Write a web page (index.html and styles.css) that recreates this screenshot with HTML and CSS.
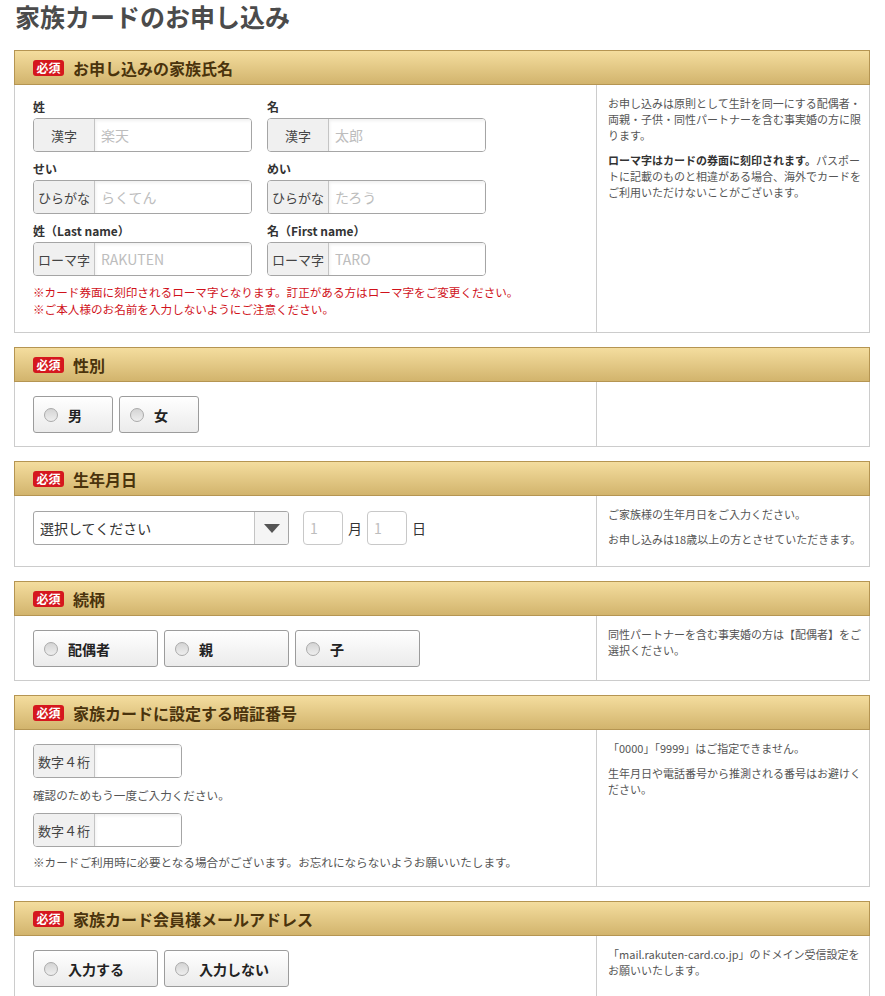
FILE: index.html
```html
<!DOCTYPE html>
<html lang="ja">
<head>
  <meta charset="UTF-8">
  <meta name="viewport" content="width=device-width, initial-scale=1.0">
  <title>家族カードのお申し込み</title>
  <link rel="stylesheet" href="styles.css">
</head>
<body>
  <div class="page">
    <h1 class="page-title">家族カードのお申し込み</h1>

    <section class="block">
      <h2 class="block-head"><span class="req">必須</span>お申し込みの家族氏名</h2>
      <div class="block-body">
        <div class="block-main">
          <div class="name-grid">
            <div class="field">
              <label class="field-label">姓</label>
              <div class="addon-input"><span class="addon">漢字</span><input type="text" placeholder="楽天"></div>
            </div>
            <div class="field">
              <label class="field-label">名</label>
              <div class="addon-input"><span class="addon">漢字</span><input type="text" placeholder="太郎"></div>
            </div>
            <div class="field">
              <label class="field-label">せい</label>
              <div class="addon-input"><span class="addon">ひらがな</span><input type="text" placeholder="らくてん"></div>
            </div>
            <div class="field">
              <label class="field-label">めい</label>
              <div class="addon-input"><span class="addon">ひらがな</span><input type="text" placeholder="たろう"></div>
            </div>
            <div class="field">
              <label class="field-label">姓（Last name）</label>
              <div class="addon-input"><span class="addon">ローマ字</span><input type="text" placeholder="RAKUTEN"></div>
            </div>
            <div class="field">
              <label class="field-label">名（First name）</label>
              <div class="addon-input"><span class="addon">ローマ字</span><input type="text" placeholder="TARO"></div>
            </div>
          </div>
          <p class="note-red">※カード券面に刻印されるローマ字となります。訂正がある方はローマ字をご変更ください。<br>※ご本人様のお名前を入力しないようにご注意ください。</p>
        </div>
        <div class="block-side">
          <p>お申し込みは原則として生計を同一にする配偶者・両親・子供・同性パートナーを含む事実婚の方に限ります。</p>
          <p><strong>ローマ字はカードの券面に刻印されます。</strong>パスポートに記載のものと相違がある場合、海外でカードをご利用いただけないことがございます。</p>
        </div>
      </div>
    </section>

    <section class="block">
      <h2 class="block-head"><span class="req">必須</span>性別</h2>
      <div class="block-body">
        <div class="block-main">
          <div class="radio-row">
            <label class="radio-btn radio-btn--small"><span class="dot"></span>男</label>
            <label class="radio-btn radio-btn--small"><span class="dot"></span>女</label>
          </div>
        </div>
        <div class="block-side"></div>
      </div>
    </section>

    <section class="block">
      <h2 class="block-head"><span class="req">必須</span>生年月日</h2>
      <div class="block-body">
        <div class="block-main block-main--date">
          <div class="date-row">
            <div class="select-box">
              <span class="select-text">選択してください</span>
              <span class="select-arrow"><i></i></span>
            </div>
            <input class="small-input" type="text" placeholder="1">
            <span class="unit">月</span>
            <input class="small-input" type="text" placeholder="1">
            <span class="unit">日</span>
          </div>
        </div>
        <div class="block-side">
          <p>ご家族様の生年月日をご入力ください。</p>
          <p>お申し込みは18歳以上の方とさせていただきます。</p>
        </div>
      </div>
    </section>

    <section class="block">
      <h2 class="block-head"><span class="req">必須</span>続柄</h2>
      <div class="block-body">
        <div class="block-main">
          <div class="radio-row">
            <label class="radio-btn"><span class="dot"></span>配偶者</label>
            <label class="radio-btn"><span class="dot"></span>親</label>
            <label class="radio-btn"><span class="dot"></span>子</label>
          </div>
        </div>
        <div class="block-side">
          <p>同性パートナーを含む事実婚の方は【配偶者】をご選択ください。</p>
        </div>
      </div>
    </section>

    <section class="block">
      <h2 class="block-head"><span class="req">必須</span>家族カードに設定する暗証番号</h2>
      <div class="block-body">
        <div class="block-main">
          <div class="addon-input addon-input--pin"><span class="addon">数字４桁</span><input type="password"></div>
          <p class="hint">確認のためもう一度ご入力ください。</p>
          <div class="addon-input addon-input--pin"><span class="addon">数字４桁</span><input type="password"></div>
          <p class="hint hint--last">※カードご利用時に必要となる場合がございます。お忘れにならないようお願いいたします。</p>
        </div>
        <div class="block-side">
          <p>「0000」「9999」はご指定できません。</p>
          <p>生年月日や電話番号から推測される番号はお避けください。</p>
        </div>
      </div>
    </section>

    <section class="block">
      <h2 class="block-head"><span class="req">必須</span>家族カード会員様メールアドレス</h2>
      <div class="block-body">
        <div class="block-main">
          <div class="radio-row">
            <label class="radio-btn"><span class="dot"></span>入力する</label>
            <label class="radio-btn"><span class="dot"></span>入力しない</label>
          </div>
        </div>
        <div class="block-side">
          <p>「mail.rakuten-card.co.jp」のドメイン受信設定をお願いいたします。</p>
        </div>
      </div>
    </section>
  </div>
</body>
</html>
```

FILE: styles.css
```css
body {
  margin: 0;
  font-family: "Noto Sans CJK JP", "Noto Sans", sans-serif;
  color: #333;
  background: #fff;
}
.page {
  padding: 0 15px 40px 14px;
}
.page-title {
  margin: 0 0 18px;
  padding: 1px 0 0 1px;
  font-size: 25px;
  line-height: 31px;
  font-weight: bold;
  color: #4b4b4b;
}
.block {
  margin-bottom: 14px;
}
.block-head {
  display: flex;
  align-items: center;
  height: 33px;
  margin: 0;
  padding-left: 18px;
  border: 1px solid #b59552;
  background: linear-gradient(#f4dd9e, #d2b46d);
  font-size: 16px;
  font-weight: bold;
  color: #4a330c;
}
.req {
  display: inline-block;
  height: 16px;
  line-height: 16px;
  padding: 0 3.5px;
  margin-right: 9px;
  border-radius: 3px;
  background: #d5171e;
  color: #fff;
  font-size: 12px;
  font-weight: bold;
}
.block-body {
  display: grid;
  grid-template-columns: 581px 1fr;
  border: 1px solid #ccc;
  border-top: none;
}
.block-main {
  padding: 14px 18px 13px;
}
.block-main--date {
  padding: 15px 18px 21px;
}
.block-side {
  border-left: 1px solid #ccc;
  padding: 10px 6px 10px 11px;
  font-size: 11px;
  line-height: 16px;
  color: #555;
}
.block-side p {
  margin: 0 0 9px;
}
.block-side strong {
  color: #333;
}

/* name fields */
.name-grid {
  display: grid;
  grid-template-columns: 219px 219px;
  column-gap: 15px;
  row-gap: 9px;
}
.field-label {
  display: block;
  margin-bottom: 3px;
  font-size: 12px;
  line-height: 16px;
  font-weight: bold;
  color: #333;
}
.addon-input {
  display: flex;
  height: 34px;
  box-sizing: border-box;
  border: 1px solid #a5a5a5;
  border-radius: 4px;
  overflow: hidden;
  background: #fff;
}
.addon {
  flex: 0 0 60px;
  display: flex;
  align-items: center;
  justify-content: center;
  background: #f0f0f0;
  border-right: 1px solid #c4c4c4;
  font-size: 13px;
  color: #444;
  white-space: nowrap;
}
.addon-input input {
  flex: 1;
  min-width: 0;
  border: none;
  outline: none;
  padding: 0 6px;
  font: inherit;
  font-size: 14px;
  box-shadow: inset 1px 2px 3px rgba(0,0,0,0.06);
}
.addon-input--pin {
  width: 149px;
}
input::placeholder {
  color: #bdbdbd;
}
.note-red {
  margin: 8px 0 1px;
  font-size: 11.6px;
  line-height: 17px;
  color: #d0121b;
}
.hint {
  margin: 9px 0 10px;
  font-size: 11.6px;
  line-height: 16px;
  color: #555;
}
.hint--last {
  margin: 7px 0 3px;
}

/* radio buttons */
.radio-row {
  display: flex;
  gap: 6px;
}
.radio-btn {
  display: flex;
  align-items: center;
  width: 125px;
  height: 37px;
  box-sizing: border-box;
  padding-left: 10px;
  border: 1px solid #9c9c9c;
  border-radius: 3px;
  background: linear-gradient(#fff, #ebebeb);
  font-size: 14px;
  font-weight: bold;
  color: #222;
}
.radio-btn--small {
  width: 80px;
}
.dot {
  width: 14px;
  height: 14px;
  box-sizing: border-box;
  margin-right: 10px;
  border: 1px solid #aaa;
  border-radius: 50%;
  background: linear-gradient(#d4d4d4, #eee);
}

/* date */
.date-row {
  display: flex;
  align-items: center;
  gap: 5px;
}
.select-box {
  display: flex;
  width: 256px;
  height: 34px;
  box-sizing: border-box;
  margin-right: 9px;
  border: 1px solid #a5a5a5;
  border-radius: 3px;
  overflow: hidden;
}
.select-text {
  flex: 1;
  display: flex;
  align-items: center;
  padding-left: 6px;
  font-size: 14px;
  color: #333;
}
.select-arrow {
  flex: 0 0 33px;
  display: flex;
  align-items: center;
  justify-content: center;
  border-left: 1px solid #c4c4c4;
  background: #f5f5f5;
}
.select-arrow i {
  width: 0;
  height: 0;
  border-left: 8px solid transparent;
  border-right: 8px solid transparent;
  border-top: 9px solid #555;
}
.small-input {
  width: 40px;
  height: 34px;
  box-sizing: border-box;
  padding: 0 6px;
  border: 1px solid #c8c8c8;
  border-radius: 4px;
  font: inherit;
  font-size: 14px;
  outline: none;
}
.unit {
  font-size: 14px;
  color: #333;
}
```
